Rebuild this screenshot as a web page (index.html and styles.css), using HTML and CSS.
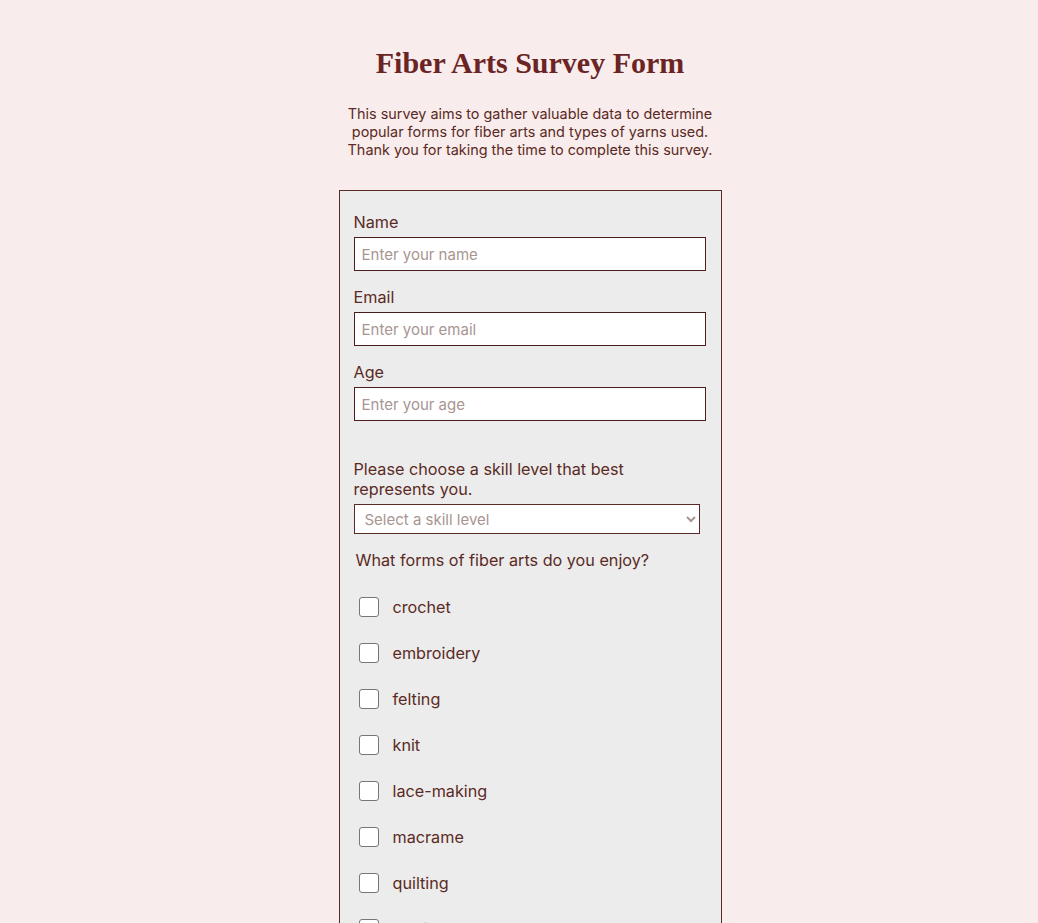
FILE: index.html
```html
<!DOCTYPE html>
<html lang="en">
<head>
<meta charset="utf-8">
<title>Fiber Arts Survey Form</title>
<link rel="stylesheet" href="styles.css">
</head>
<body>
<main class="page">
  <h1 class="title">Fiber Arts Survey Form</h1>
  <p class="intro">This survey aims to gather valuable data to determine popular forms for fiber arts and types of yarns used. Thank you for taking the time to complete this survey.</p>
  <form class="survey">
    <div class="field">
      <label class="label" for="name">Name</label>
      <input class="text-input" id="name" type="text" placeholder="Enter your name">
    </div>
    <div class="field">
      <label class="label" for="email">Email</label>
      <input class="text-input" id="email" type="email" placeholder="Enter your email">
    </div>
    <div class="field">
      <label class="label" for="age">Age</label>
      <input class="text-input" id="age" type="number" placeholder="Enter your age">
    </div>
    <div class="field field-select">
      <label class="label" for="skill">Please choose a skill level that best represents you.</label>
      <select class="select" id="skill">
        <option value="" selected disabled>Select a skill level</option>
        <option>Beginner</option>
        <option>Intermediate</option>
        <option>Advanced</option>
      </select>
    </div>
    <fieldset class="group">
      <legend class="question">What forms of fiber arts do you enjoy?</legend>
      <label class="check"><input type="checkbox" class="box"><span>crochet</span></label>
      <label class="check"><input type="checkbox" class="box"><span>embroidery</span></label>
      <label class="check"><input type="checkbox" class="box"><span>felting</span></label>
      <label class="check"><input type="checkbox" class="box"><span>knit</span></label>
      <label class="check"><input type="checkbox" class="box"><span>lace-making</span></label>
      <label class="check"><input type="checkbox" class="box"><span>macrame</span></label>
      <label class="check"><input type="checkbox" class="box"><span>quilting</span></label>
      <label class="check"><input type="checkbox" class="box"><span>sewing</span></label>
      <label class="check"><input type="checkbox" class="box"><span>weaving</span></label>
    </fieldset>
  </form>
</main>
</body>
</html>
```

FILE: styles.css
```css
* { box-sizing: border-box; }

body {
  margin: 0;
  background: #f9ecec;
  color: #5a2a24;
  font-family: "Inter", "Lato", "Liberation Sans", sans-serif;
}

.page {
  display: flex;
  flex-direction: column;
  align-items: center;
  padding: 42px 0 0 22px;
}

.title {
  margin: 0;
  font-family: "Liberation Serif", "DejaVu Serif", serif;
  font-weight: bold;
  font-size: 30px;
  line-height: 42px;
  color: #6a2424;
}

.intro {
  width: 380px;
  margin: 21px 0 31px;
  text-align: center;
  font-size: 14.4px;
  line-height: 18px;
}

.survey {
  width: 383px;
  background: #ececec;
  border: 1px solid #5a2a24;
  padding: 21px 15px 40px 14px;
  display: flex;
  flex-direction: column;
}

.field {
  display: flex;
  flex-direction: column;
  gap: 5px;
  margin-bottom: 16px;
}

.field-select {
  margin-top: 22px;
  gap: 5px;
  margin-bottom: 16px;
}

.label {
  font-size: 16.2px;
  line-height: 20px;
}

.text-input {
  width: 352px;
  height: 34px;
  border: 1px solid #4a1e1a;
  background: #fff;
  padding: 0 7px;
  font: inherit;
  font-size: 15px;
  color: #5a2a24;
}

.text-input::placeholder { color: #a89591; }

.select {
  width: 346px;
  height: 30px;
  border: 1px solid #5a2a24;
  background: #fff;
  padding: 0 6px;
  font: inherit;
  font-size: 15px;
  color: #a89591;
}

.group {
  border: 0;
  margin: 0;
  padding: 0 0 0 2px;
  display: flex;
  flex-direction: column;
}

.question {
  padding: 0;
  font-size: 16.2px;
  line-height: 20px;
  margin-bottom: 14px;
}

.check {
  display: flex;
  align-items: center;
  gap: 14px;
  height: 46px;
  font-size: 16.2px;
  padding-left: 3px;
}

.box {
  appearance: none;
  -webkit-appearance: none;
  margin: 0;
  width: 20px;
  height: 20px;
  border: 1px solid #767676;
  border-radius: 3px;
  background: #fff;
  flex: none;
}
```
